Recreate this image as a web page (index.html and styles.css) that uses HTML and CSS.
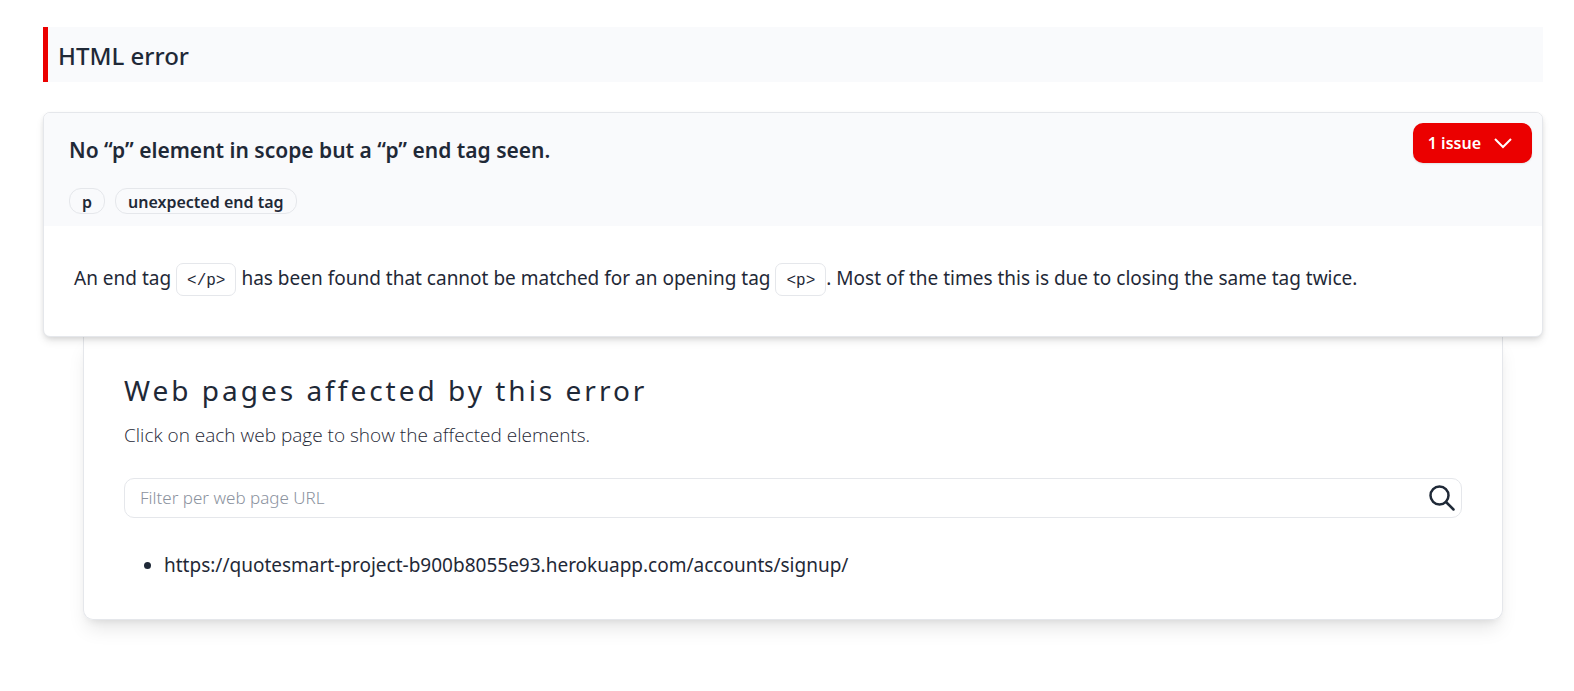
FILE: index.html
```
<!DOCTYPE html>
<html lang="en">
<head>
<meta charset="utf-8">
<title>HTML error</title>
<link rel="stylesheet" href="styles.css">
</head>
<body>
<main class="report">
  <h2 class="category">HTML error</h2>
  <section class="error">
    <article class="card">
      <header class="card-header">
        <div class="summary">
          <h3 class="card-title">No “p” element in scope but a “p” end tag seen.</h3>
          <ul class="tags">
            <li class="tag">p</li>
            <li class="tag">unexpected end tag</li>
          </ul>
        </div>
        <button class="issues" type="button" aria-expanded="true">
          <span>1 issue</span>
          <svg class="chevron" viewBox="0 0 18 18" aria-hidden="true"><path d="M1 5l8 8 8-8"/></svg>
        </button>
      </header>
      <p class="description">An end tag <code>&lt;/p&gt;</code> has been found that cannot be matched for an opening tag <code>&lt;p&gt;</code>. Most of the times this is due to closing the same tag twice.</p>
    </article>
    <div class="pages">
      <h4 class="pages-title">Web pages affected by this error</h4>
      <p class="hint">Click on each web page to show the affected elements.</p>
      <form class="filter">
        <input class="filter-input" type="text" aria-label="Filter per web page URL" placeholder="Filter per web page URL">
        <button class="search" type="submit" aria-label="Search">
          <svg viewBox="0 0 26 26" aria-hidden="true"><circle cx="10.500" cy="10.500" r="9"/><path d="M17 17l7.500 7.500"/></svg>
        </button>
      </form>
      <ul class="urls">
        <li>https://quotesmart-project-b900b8055e93.herokuapp.com/accounts/signup/</li>
      </ul>
    </div>
  </section>
</main>
</body>
</html>
```
FILE: styles.css
```
* { box-sizing: border-box; }
body {
  margin: 0;
  background: #fff;
  color: #1f2937;
  font: 19px/30px "Segoe UI", "Noto Sans", sans-serif;
}
h2, h3, h4, p, ul { margin: 0; padding: 0; }
button, input { font: inherit; color: inherit; }
.report { padding: 27px 31px 40px 43px; }
.category {
  padding: 11px 10px 9px;
  border-left: 5px solid #eb0000;
  background: #f9fafc;
  font-size: 24px;
  line-height: 35px;
  font-weight: 500;
}
.error { margin-top: 30px; }
.card {
  position: relative;
  border: 1px solid #e5e7eb;
  border-radius: 7px;
  background: #fff;
  box-shadow: 0 5px 8px -1px rgba(0, 0, 0, .1), 0 2px 5px -1px rgba(0, 0, 0, .1);
}
.card-header {
  display: flex;
  justify-content: space-between;
  align-items: flex-start;
  padding: 10px 10px 12px 25px;
  border-radius: 6px 6px 0 0;
  background: #f9fafc;
}
.summary { padding-top: 10px; }
.card-title { font-size: 21px; line-height: 35px; font-weight: 600; }
.tags { display: flex; gap: 10px; margin-top: 20px; list-style: none; }
.tag {
  height: 26px;
  padding: 0 12px;
  border: 1px solid #e5e7eb;
  border-radius: 12px;
  font-size: 16px;
  line-height: 26px;
  font-weight: 600;
}
.issues {
  display: flex;
  align-items: center;
  gap: 13px;
  height: 40px;
  padding: 0 20px 0 15px;
  border: 0;
  border-radius: 10px;
  background: #eb0000;
  color: #fff;
  font-size: 16px;
  font-weight: 600;
  box-shadow: 0 1px 2px rgba(0, 0, 0, .1);
}
.chevron { width: 18px; height: 18px; fill: none; stroke: currentColor; stroke-width: 2; }
.description { padding: 35px 30px 38px; line-height: 34px; }
code {
  padding: 8px 10px 5px;
  border: 1px solid #e5e7eb;
  border-radius: 7px;
  font-family: "Liberation Mono", monospace;
  font-size: 16px;
}
.pages {
  margin: 0 40px;
  padding: 34px 40px 39px;
  border: 1px solid #e5e7eb;
  border-top: 0;
  border-radius: 0 0 10px 10px;
  box-shadow: 0 12px 19px -4px rgba(0, 0, 0, .1), 0 5px 8px -5px rgba(0, 0, 0, .1);
}
.pages-title { font-size: 28px; line-height: 38px; font-weight: 400; letter-spacing: 3px; }
.hint { margin-top: 11px; font-family: "Segoe UI", "Open Sans", sans-serif; font-weight: 300; }
.filter {
  display: flex;
  align-items: center;
  height: 40px;
  margin-top: 28px;
  padding-right: 6px;
  border: 1px solid #e5e7eb;
  border-radius: 10px;
}
.filter-input {
  flex: 1;
  min-width: 0;
  padding: 0 15px;
  border: 0;
  outline: 0;
  background: none;
  font-size: 17px;
  font-weight: 300;
}
.filter-input::placeholder { color: #8b929e; opacity: 1; }
.search { display: flex; padding: 0; border: 0; background: none; }
.search svg { width: 26px; height: 26px; fill: none; stroke: currentColor; stroke-width: 2.500; stroke-linecap: round; }
.urls { margin-top: 32px; padding-left: 40px; }
```
